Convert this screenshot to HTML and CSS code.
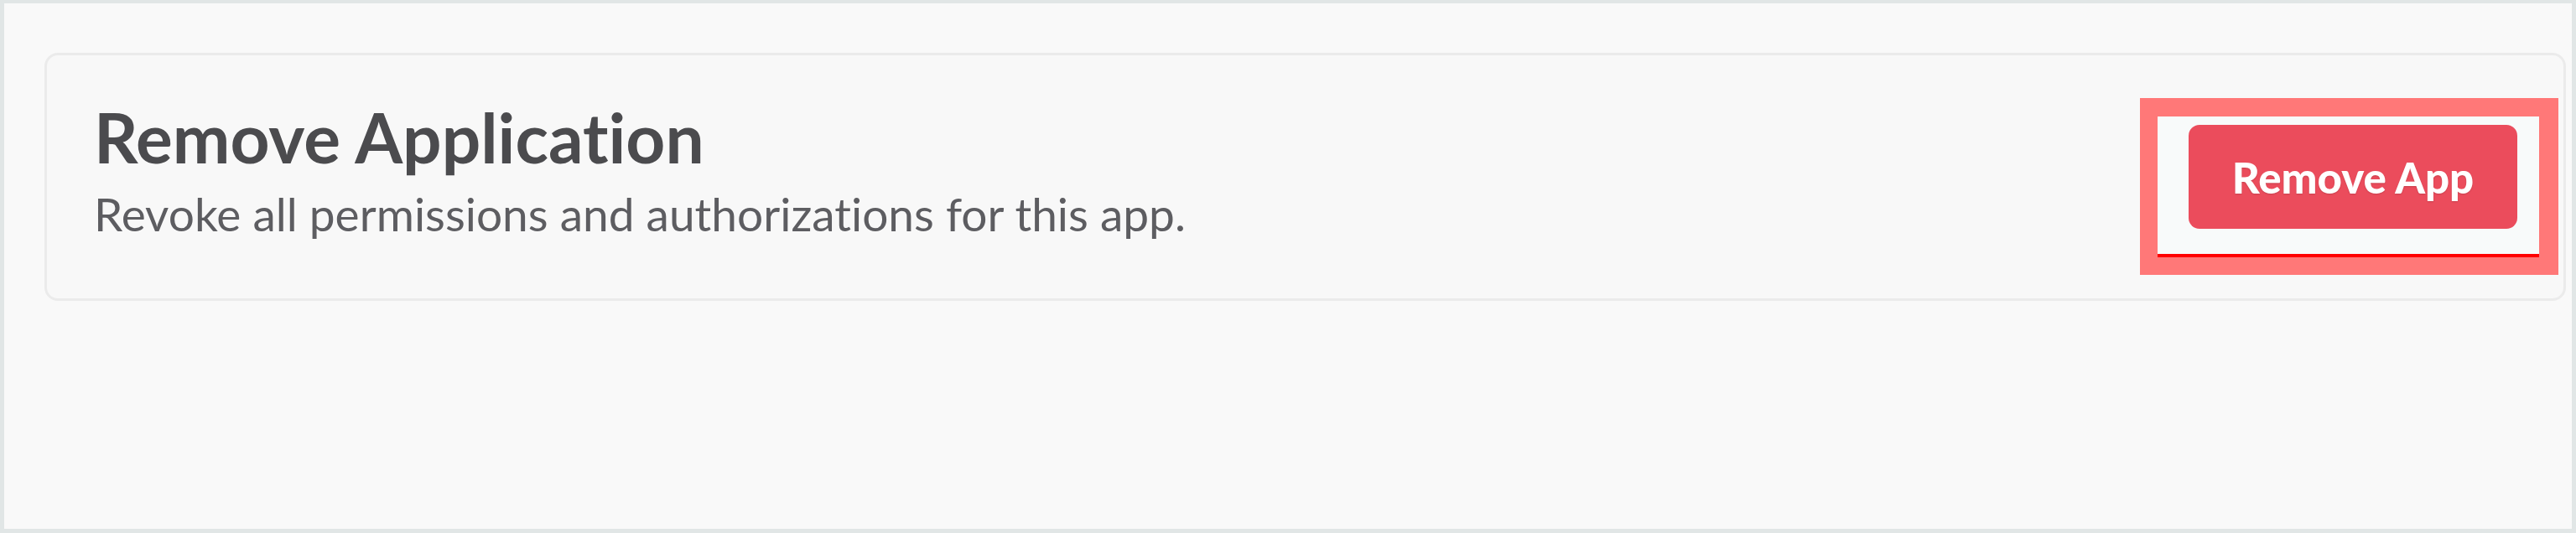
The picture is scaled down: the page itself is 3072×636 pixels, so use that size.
FILE: index.html
```html
<!DOCTYPE html>
<html lang="en">
<head>
    <meta charset="UTF-8">
    <meta name="viewport" content="width=device-width, initial-scale=1.0">
    <title>Remove Application</title>
    <link rel="stylesheet" href="styles.css">
</head>
<body>
    <div class="page-frame">
        <div class="remove-card">
            <div class="remove-text">
                <h2 class="remove-title">Remove Application</h2>
                <p class="remove-desc">Revoke all permissions and authorizations for this app.</p>
            </div>

            <!-- khung đánh dấu quanh nút -->
            <div class="highlight">
                <div class="highlight-inner">
                    <button type="button" class="btn-danger">Remove App</button>
                </div>
            </div>
        </div>
    </div>
</body>
</html>
```

FILE: styles.css
```css
body {
    margin: 0;
    font-family: Lato, "Open Sans", sans-serif;
    font-variant-ligatures: none;
    background-color: #f9f9f9;
}

/* khung ngoài */
.page-frame {
    box-sizing: border-box;
    height: 636px;
    border: 5px solid #e1e6e6;
    border-top-width: 4px;
    background-color: #f9f9f9;
    padding: 59px 7px 0 48px;
}

.remove-card {
    display: flex;
    justify-content: space-between;
    align-items: flex-start;
    border: 3px solid #ebebeb;
    border-radius: 16px;
    background-color: #f8f8f8;
    padding: 51px 6px 28px 56px;
}

.remove-title {
    margin: -1px 0 0 0;
    font-size: 82px;
    font-weight: 700;
    line-height: 94px;
    color: #4b4b4e;
}

.remove-desc {
    margin: 12px 0 0 0;
    font-size: 55px;
    font-weight: 400;
    line-height: 67px;
    color: #5d5d61;
}

.highlight {
    border: 21px solid #ff7878;
    border-top-width: 22px;
    border-right-width: 23px;
}

.highlight-inner {
    background-color: #f8fafa;
    border-bottom: 4px solid #ff0000;
    padding: 10px 26px 30px 37px;
}

.btn-danger {
    display: block;
    box-sizing: border-box;
    width: 392px;
    height: 124px;
    border: none;
    border-radius: 13px;
    background-color: #eb4c5c;
    color: white;
    font-family: Lato, sans-serif;
    font-variant-ligatures: none;
    font-size: 51px;
    font-weight: 900;
    text-shadow: 0 1px 2px rgba(0, 0, 0, 0.15);
    cursor: pointer;
}
```
